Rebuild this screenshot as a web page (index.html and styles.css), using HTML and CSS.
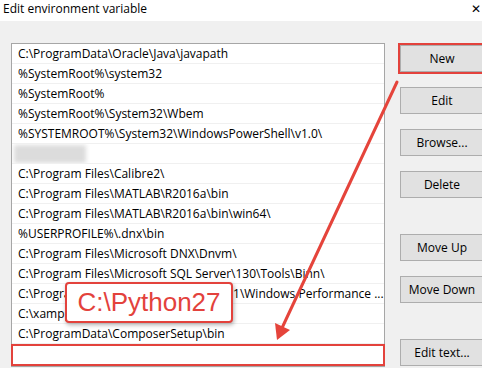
FILE: index.html
```html
<!DOCTYPE html>
<html lang="en">
<head>
    <meta charset="UTF-8">
    <title>Edit environment variable</title>
    <link rel="stylesheet" href="styles.css">
</head>
<body>
    <div class="titlebar">
        <span class="title">Edit environment variable</span>
        <span class="close">✕</span>
    </div>

    <div class="dialog">
        <ul class="path-list">
            <li>C:\ProgramData\Oracle\Java\javapath</li>
            <li>%SystemRoot%\system32</li>
            <li>%SystemRoot%</li>
            <li>%SystemRoot%\System32\Wbem</li>
            <li>%SYSTEMROOT%\System32\WindowsPowerShell\v1.0\</li>
            <li><span class="blurred"></span></li>
            <li>C:\Program Files\Calibre2\</li>
            <li>C:\Program Files\MATLAB\R2016a\bin</li>
            <li>C:\Program Files\MATLAB\R2016a\bin\win64\</li>
            <li>%USERPROFILE%\.dnx\bin</li>
            <li>C:\Program Files\Microsoft DNX\Dnvm\</li>
            <li>C:\Program Files\Microsoft SQL Server\130\Tools\Binn\</li>
            <li>C:\Program Files (x86)\Windows Kits\8.1\Windows Performance ...</li>
            <li>C:\xampp\php</li>
            <li>C:\ProgramData\ComposerSetup\bin</li>
            <li class="new-entry"></li>
        </ul>

        <div class="buttons">
            <button class="btn btn-new">New</button>
            <button class="btn">Edit</button>
            <button class="btn">Browse...</button>
            <button class="btn">Delete</button>
            <button class="btn spaced">Move Up</button>
            <button class="btn">Move Down</button>
            <button class="btn spaced">Edit text...</button>
        </div>
    </div>

    <div class="callout">C:\Python27</div>

    <svg class="arrow" width="482" height="368" viewBox="0 0 482 368">
        <line x1="397" y1="82" x2="282" y2="328" stroke="#e5443b" stroke-width="3" stroke-linecap="round"/>
        <polygon points="277,340 275,323 290,330" fill="#e5443b"/>
    </svg>
</body>
</html>
```

FILE: styles.css
```css
body {
    margin: 0;
    width: 482px;
    height: 368px;
    overflow: hidden;
    background: #f0f0f0;
    font-family: 'Open Sans', 'Noto Sans', sans-serif;
    font-size: 12px;
    color: #000;
    position: relative;
}

.titlebar {
    height: 21px;
    background: #fff;
    display: flex;
    align-items: center;
    justify-content: space-between;
    padding: 0 0 0 3px;
}

.title {
    font-size: 12px;
    margin-top: -5px;
}

.close {
    font-size: 12px;
    margin-top: -4px;
    margin-right: 1px;
}

.dialog {
    display: flex;
    padding: 22px 0 0 11px;
}

.path-list {
    list-style: none;
    margin: 0;
    padding: 0;
    width: 372px;
    border: 1px solid #a6a6a6;
    background: #fff;
    flex-shrink: 0;
}

.path-list li {
    height: 20px;
    line-height: 19px;
    padding: 0 4px 0 6px;
    border-bottom: 1px solid #f0f0f0;
    box-sizing: border-box;
    white-space: nowrap;
    overflow: hidden;
}

.blurred {
    display: block;
    width: 72px;
    height: 18px;
    margin: 1px 0 0 -4px;
    background: #dcdcdc;
    filter: blur(2px);
}

.path-list li.new-entry {
    height: 22px;
    margin: 0 -1px;
    border: 2px solid #e3423c;
}

.buttons {
    display: flex;
    flex-direction: column;
    gap: 15px;
    margin: 2px 0 0 15px;
}

.btn {
    width: 84px;
    height: 27px;
    flex-shrink: 0;
    padding: 0;
    background: #e1e1e1;
    border: 1px solid #adadad;
    font-family: inherit;
    font-size: 12px;
    color: #000;
}

.btn-new {
    outline: 2px solid #e3423c;
    outline-offset: 0;
}

.spaced {
    margin-top: 21px;
}

.callout {
    position: absolute;
    left: 65px;
    top: 282px;
    width: 164px;
    height: 37px;
    border: 2px solid #e3423c;
    border-radius: 4px;
    background: #fff;
    box-shadow: 1px 2px 4px rgba(0, 0, 0, 0.3);
    font-family: 'Liberation Sans', Arial, sans-serif;
    font-size: 26px;
    color: #e3423c;
    display: flex;
    align-items: center;
    justify-content: center;
}

.arrow {
    position: absolute;
    left: 0;
    top: 0;
    pointer-events: none;
}
```
